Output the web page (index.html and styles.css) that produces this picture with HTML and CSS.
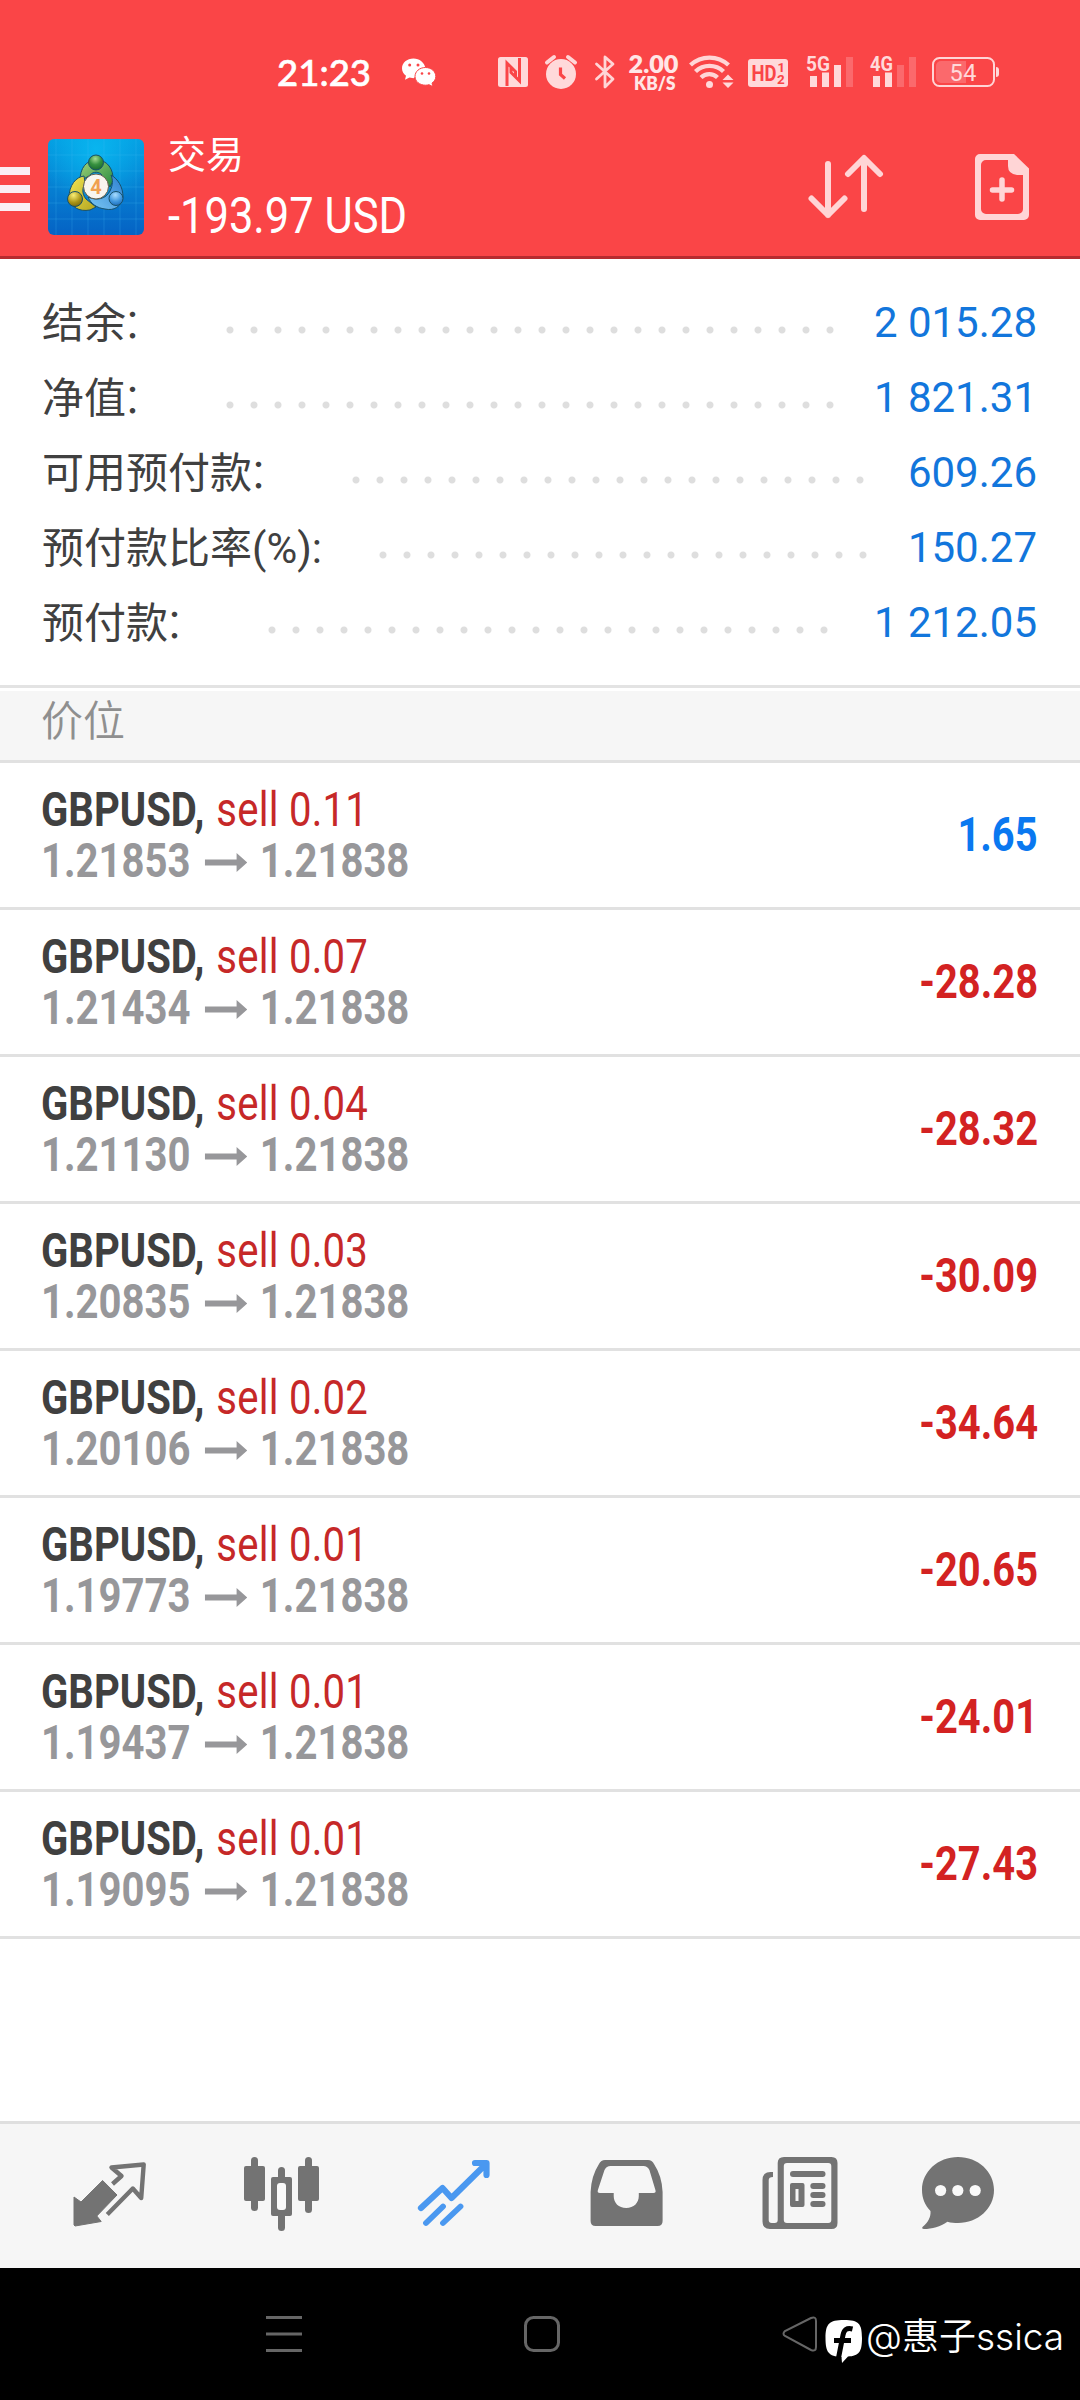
FILE: index.html
```html
<!DOCTYPE html>
<html lang="zh-CN">
<head>
<meta charset="utf-8">
<title>交易</title>
<link rel="stylesheet" href="styles.css">
</head>
<body>
<header class="header">
  <div class="status">
    <svg class="clock" width="96" height="50" viewBox="276 45 96 50"><text class="lato" x="277" y="85.5" font-size="36.5" textLength="94">21:23</text></svg>
    <svg class="wechat" width="36" height="50" viewBox="401 45 36 50">
      <path d="M413.500 58.500c-6.500 0-11.500 4.300-11.500 9.700 0 3 1.500 5.600 4 7.500l-1 4 4.500-2.200 4 .7 12-10c-1-5.500-6-9.700-12-9.700z"/>
      <path class="bite" d="M425.500 67.500c-6 0-10.500 4-10.500 8.900s4.500 8.800 10.500 8.800c1.200 0 2.400-.2 3.500-.5l4 2-1-3.600c2.400-1.700 3.800-4 3.800-6.700 0-4.900-4.500-8.900-10.300-8.900z"/>
      <g class="hole"><circle cx="409.700" cy="65" r="1.500"/><circle cx="418" cy="65" r="1.500"/><circle cx="422" cy="73.500" r="1.300"/><circle cx="429" cy="73.500" r="1.300"/></g>
    </svg>
    <svg class="nfc" width="32" height="50" viewBox="497 45 32 50">
      <rect x="498" y="57" width="30" height="30" rx="2.500"/>
      <path class="cut" d="M507 86V63l8.500 8.500v5M519.500 58v23l-8.500-8.500v-5" stroke-width="3"/>
    </svg>
    <svg class="alarm" width="34" height="50" viewBox="544 45 34 50">
      <circle cx="561" cy="74" r="15"/>
      <path class="line" d="M547 62.500l7-5.500M575 62.500l-7-5.500" stroke-width="4"/>
      <path class="cut" d="M560.500 67.500v7l4.500 4" stroke-width="3.200"/>
    </svg>
    <svg class="bt" width="24" height="50" viewBox="594 45 24 50"><path class="line" d="M596.500 64L613 79l-8 8V57l8 7-16.500 15" stroke-width="2.800"/></svg>
    <svg class="speed" width="54" height="50" viewBox="627 45 54 50">
      <text class="lato black" x="628.500" y="73" font-size="25" textLength="50" lengthAdjust="spacingAndGlyphs">2.00</text>
      <text class="lato black" x="634" y="90" font-size="19.500" textLength="41.500" lengthAdjust="spacingAndGlyphs">KB/S</text>
    </svg>
    <svg class="wifi" width="46" height="50" viewBox="688 45 46 50">
      <path class="line butt" d="M690.500 65a28 28 0 0 1 38 0M695.500 71.500a20 20 0 0 1 28 0M701 77.500a12 12 0 0 1 16.500 0" stroke-width="4.300"/>
      <circle cx="709.500" cy="84.500" r="3.500"/>
      <path d="M722.500 80l5.500-5.500 5.500 5.500zM722.500 82.500h11L728 88z"/>
    </svg>
    <svg class="hd" width="42" height="50" viewBox="747 45 42 50">
      <rect x="748" y="59" width="40" height="28" rx="3"/>
      <g class="hole"><text class="robo heavy" x="751.500" y="81" font-size="22" textLength="25" lengthAdjust="spacingAndGlyphs">HD</text><text class="robo heavy" x="777.500" y="72" font-size="13">1</text><text class="robo heavy" x="777" y="83.500" font-size="13.500">2</text></g>
    </svg>
    <svg class="sig" width="50" height="50" viewBox="805 45 50 50">
      <text class="robo heavy" x="806" y="70.500" font-size="21" textLength="24" lengthAdjust="spacingAndGlyphs">5G</text>
      <path d="M810 76h7v11h-7zM822 72.500h7V87h-7zM834 65h7v22h-7z"/><path class="faint" d="M846 57h7v30h-7z"/>
    </svg>
    <svg class="sig2" width="50" height="50" viewBox="868 45 50 50">
      <text class="robo heavy" x="870" y="70.500" font-size="21" textLength="23" lengthAdjust="spacingAndGlyphs">4G</text>
      <path d="M873 76h7v11h-7zM885 72.500h7V87h-7z"/><path class="faint" d="M897 65h7v22h-7zM909 57h7v30h-7z"/>
    </svg>
    <svg class="battery" width="70" height="50" viewBox="931 45 70 50">
      <rect class="line" x="933" y="58" width="61" height="28" rx="6.500" stroke-width="2"/>
      <path class="faint" d="M941 61h25v22h-25a5 5 0 0 1-5-5V66a5 5 0 0 1 5-5z"/>
      <path d="M996 67q3 0 3 3v4q0 3-3 3z"/>
      <text class="robo" x="949.500" y="81" font-size="23.500" textLength="27">54</text>
    </svg>
  </div>
  <div class="titlebar">
    <div class="menu"><i></i><i></i><i></i></div>
    <svg class="logo" width="96" height="96" viewBox="0 0 96 96">
      <defs>
        <linearGradient id="sky" x1="0" y1="0" x2="0" y2="1"><stop offset="0" stop-color="#039be0"/><stop offset=".5" stop-color="#0680d2"/><stop offset="1" stop-color="#0562c4"/></linearGradient>
        <radialGradient id="glow" cx=".5" cy=".1" r=".6"><stop offset="0" stop-color="#09b5ef"/><stop offset="1" stop-color="#09b5ef" stop-opacity="0"/></radialGradient>
        <linearGradient id="gr" x1="0" y1="0" x2="1" y2="1"><stop offset="0" stop-color="#a5d37a"/><stop offset="1" stop-color="#238a3e"/></linearGradient>
        <linearGradient id="ye" x1="0" y1="0" x2="1" y2="1"><stop offset="0" stop-color="#f2e554"/><stop offset="1" stop-color="#b3a51f"/></linearGradient>
        <linearGradient id="bl" x1="0" y1="1" x2="1" y2="0"><stop offset="0" stop-color="#7cc8f5"/><stop offset="1" stop-color="#2c7fd0"/></linearGradient>
        <radialGradient id="gb" cx=".45" cy=".25" r=".8"><stop offset="0" stop-color="#a4dc92"/><stop offset=".5" stop-color="#37913f"/><stop offset="1" stop-color="#17642c"/></radialGradient>
        <radialGradient id="yb" cx=".4" cy=".25" r=".8"><stop offset="0" stop-color="#f9ee77"/><stop offset=".6" stop-color="#ab9517"/><stop offset="1" stop-color="#77670d"/></radialGradient>
        <radialGradient id="bb" cx=".45" cy=".25" r=".8"><stop offset="0" stop-color="#a8dcff"/><stop offset=".6" stop-color="#3d95dd"/><stop offset="1" stop-color="#1d68b5"/></radialGradient>
      </defs>
      <rect width="96" height="96" rx="6" fill="url(#sky)"/><rect width="96" height="96" rx="6" fill="url(#glow)"/>
      <path class="grid" d="M8 0v96M24 0v96M40 0v96M56 0v96M72 0v96M88 0v96M0 16h96M0 32h96M0 48h96M0 64h96M0 80h96"/>
      <g stroke="#17506a" stroke-width="1">
        <path d="M32 42c0-13 6-21 17-21 10 0 17 9 16 21l-3 6-9-13c-4-3-9-2-12 2z" fill="url(#gr)"/>
        <path d="M36 37c-8 1-15 9-15 22 2 9 10 14 21 12l6-3-10-8c-5-6-3-12-1-17z" fill="url(#ye)"/>
        <path d="M63 36c7 4 12 12 12 22-2 10-9 14-18 12-8-1-14-5-17-12 9 4 18 2 22-6 3-6 3-11 1-16z" fill="url(#bl)"/>
        <circle cx="48" cy="23.500" r="7.500" fill="url(#gb)"/><circle cx="27" cy="60" r="7.500" fill="url(#yb)"/><circle cx="68" cy="59.500" r="7" fill="url(#bb)"/>
        <circle cx="48" cy="47.500" r="12.500" fill="#f8f5ef" stroke="#665d49"/>
      </g>
      <text class="robo heavy" x="48" y="54.500" text-anchor="middle" font-size="20" fill="#f0a050">4</text>
    </svg>
    <div class="heading"><div class="heading-name">交易</div><div class="heading-sum">-193.97 USD</div></div>
    <svg class="sort" width="76" height="68" viewBox="808 153 76 68"><path class="line" d="M828 164v51M811.500 198.500L828 215l16.500-16.500M864 209v-50M848 174l16-16 16 16" stroke-width="6"/></svg>
    <svg class="newdoc" width="56" height="68" viewBox="974 153 56 68">
      <path fill-rule="evenodd" d="M980 154h34l15 14.500V215a5 5 0 0 1-5 5h-44a5 5 0 0 1-5-5v-56a5 5 0 0 1 5-5zM986 160a5 5 0 0 0-5 5v44a5 5 0 0 0 5 5h32a5 5 0 0 0 5-5v-34h-6q-9-1-9-9v-6z"/>
      <path class="line" d="M1002 180v19M992.500 190h19" stroke-width="5.500"/>
    </svg>
  </div>
</header>

<section class="summary">
  <div class="sum-row"><span class="label">结余<span class="colon">：</span></span><i class="dots d1"></i><span class="value">2 015.28</span></div>
  <div class="sum-row"><span class="label">净值<span class="colon">：</span></span><i class="dots d1"></i><span class="value">1 821.31</span></div>
  <div class="sum-row"><span class="label">可用预付款<span class="colon">：</span></span><i class="dots d3"></i><span class="value">609.26</span></div>
  <div class="sum-row"><span class="label">预付款比率(%):</span><i class="dots d4"></i><span class="value">150.27</span></div>
  <div class="sum-row"><span class="label">预付款<span class="colon">：</span></span><i class="dots d5"></i><span class="value">1 212.05</span></div>
</section>

<h2 class="section-title">价位</h2>

<main class="positions">
  <article class="pos"><div class="deal"><div class="sym"><b>GBPUSD,</b><span>sell 0.11</span></div><div class="price"><span>1.21853</span><i class="arrow"></i><span>1.21838</span></div></div><div class="profit up">1.65</div></article>
  <article class="pos"><div class="deal"><div class="sym"><b>GBPUSD,</b><span>sell 0.07</span></div><div class="price"><span>1.21434</span><i class="arrow"></i><span>1.21838</span></div></div><div class="profit">-28.28</div></article>
  <article class="pos"><div class="deal"><div class="sym"><b>GBPUSD,</b><span>sell 0.04</span></div><div class="price"><span>1.21130</span><i class="arrow"></i><span>1.21838</span></div></div><div class="profit">-28.32</div></article>
  <article class="pos"><div class="deal"><div class="sym"><b>GBPUSD,</b><span>sell 0.03</span></div><div class="price"><span>1.20835</span><i class="arrow"></i><span>1.21838</span></div></div><div class="profit">-30.09</div></article>
  <article class="pos"><div class="deal"><div class="sym"><b>GBPUSD,</b><span>sell 0.02</span></div><div class="price"><span>1.20106</span><i class="arrow"></i><span>1.21838</span></div></div><div class="profit">-34.64</div></article>
  <article class="pos"><div class="deal"><div class="sym"><b>GBPUSD,</b><span>sell 0.01</span></div><div class="price"><span>1.19773</span><i class="arrow"></i><span>1.21838</span></div></div><div class="profit">-20.65</div></article>
  <article class="pos"><div class="deal"><div class="sym"><b>GBPUSD,</b><span>sell 0.01</span></div><div class="price"><span>1.19437</span><i class="arrow"></i><span>1.21838</span></div></div><div class="profit">-24.01</div></article>
  <article class="pos"><div class="deal"><div class="sym"><b>GBPUSD,</b><span>sell 0.01</span></div><div class="price"><span>1.19095</span><i class="arrow"></i><span>1.21838</span></div></div><div class="profit">-27.43</div></article>
</main>

<nav class="tabs">
  <svg viewBox="24 2124 171 144">
    <path d="M74 2197l7 5 21.600-21.500 14.400 14.500-20.200 21 4.400 5.500-26.200 4.500-1-1z" stroke="#737373" stroke-width="1" stroke-linejoin="round"/>
    <path class="tab-line" d="M112.500 2184l9-8-10-8.500 32.200-3-2.500 33.500-8.400-9.500-25.500 26" stroke-width="4.400"/>
  </svg>
  <svg viewBox="195 2124 171 144">
    <rect x="244" y="2166" width="21" height="35" rx="2"/><rect x="251" y="2157" width="7" height="54" rx="3.500"/>
    <rect x="298" y="2166" width="21" height="35" rx="2"/><rect x="305" y="2157" width="7" height="56" rx="3.500"/>
    <rect x="278" y="2167" width="7" height="64" rx="3.500"/><rect x="271" y="2177" width="21" height="39" rx="2"/>
    <rect class="paper" x="277" y="2183" width="9" height="27" rx="3"/>
  </svg>
  <svg class="active" viewBox="366 2124 171 144"><path class="tab-line round" d="M421 2208l21.500-20 9 10 34.500-34M475 2163h11.500v12" stroke-width="6.200"/><path class="tab-line round" d="M426 2223l17-16.500M443 2223l17.500-16.500" stroke-width="5.800"/></svg>
  <svg viewBox="537 2124 171 144"><path fill-rule="evenodd" d="M605 2160h43q4 0 6 4 8 12 8.600 28v29q0 5-5 5h-62q-5 0-5-5v-29q.600-16 8.400-28 2-4 6-4zM610.500 2166q-4 0-6 4l-6.600 20q-1 3 2 3h13.800v3c0 7 5 12 12.500 12s12.600-5 12.600-12v-3h14.600q3 0 2-3l-6-20q-2-4-6-4z"/></svg>
  <svg viewBox="708 2124 171 144">
    <path fill-rule="evenodd" d="M784 2157h47.500q6 0 6 6v60q0 6-6 6H770q-7.500 0-7.500-7.500V2180q0-8 8-8h2.500v5q-4.300 0-4.300 3v40q0 3 3 3h3q3 0 3-3v-57q0-6 6.300-6zM787 2163q-3.200 0-3.200 3v54q0 3 3.200 3h41.300q3 0 3-3v-54q0-3-3-3z"/>
    <rect x="790" y="2171" width="35.500" height="6" rx="3"/><path fill-rule="evenodd" d="M792 2183h10.500q2 0 2 2v20q0 2-2 2H792q-2 0-2-2v-20q0-2 2-2zM795.500 2189v12h3v-12z"/>
    <rect x="810.300" y="2183" width="15.200" height="6" rx="3"/><rect x="810.300" y="2192" width="15.200" height="6" rx="3"/><rect x="810.300" y="2201" width="15.200" height="6" rx="3"/>
  </svg>
  <svg viewBox="879 2124 171 144">
    <path d="M958 2157c20 0 36 14.500 36 33s-16 33-36 33c-3.500 0-7-.3-10.600-1.300-7 4.800-15.400 7.300-23.400 7.300-2 0-2.300-1.500-1-2.500 5-4 8-9.500 7.500-15.500-5.500-6-8.500-12.500-8.500-21 0-18.500 16-33 36-33z"/>
    <g class="paper"><circle cx="940.600" cy="2190.500" r="5.600"/><circle cx="957.800" cy="2190.500" r="5.600"/><circle cx="975.200" cy="2190.500" r="5.600"/></g>
  </svg>
</nav>

<footer class="sysnav">
  <svg class="recents" width="38" height="40" viewBox="264 2314 38 40"><path d="M266 2317.500h36M266 2334h36M266 2350.500h36"/></svg>
  <svg class="home" width="38" height="40" viewBox="523 2314 38 40"><rect x="525.500" y="2317.500" width="33" height="33" rx="8"/></svg>
  <svg class="back" width="38" height="40" viewBox="781 2314 38 40"><path d="M785 2331q-3 3 0 5l26 14q5 2 5-3v-26q0-5-5-3z"/></svg>
  <svg class="badge" width="38" height="46" viewBox="825 2319 38 46">
    <path d="M844 2320c15 0 18 4 18 18s-3 18-14 18.500l-6 6.500-.500-6c-13-.5-16-5-16-19s3.500-18 18.500-18z"/>
    <path class="f" d="M852.500 2329c-6-1.500-8.500 1-9.500 6l-4.500 23M834 2340.500h17"/>
  </svg>
  <span class="author">@惠子ssica</span>
</footer>
</body>
</html>
```
FILE: styles.css
```css
* { box-sizing: border-box; }
body {
  margin: 0;
  width: 1080px;
  height: 2400px;
  display: flex;
  flex-direction: column;
  background: #fff;
  font-family: Roboto, "Noto Sans CJK SC", sans-serif;
  overflow: hidden;
}
svg { display: block; flex: none; }

/* Header */
.header {
  height: 259px;
  background: #fa4547;
  border-bottom: 3px solid #b72b2f;
}
.status { display: flex; padding: 45px 0 0 276px; height: 120px; }
.status svg { fill: #ffd9da; }
.status .clock, .status .wechat { fill: #fff; }
.status .speed { fill: #ffe6e6; }
.lato { font-family: Lato, sans-serif; font-weight: 500; }
.robo { font-family: Roboto, sans-serif; }
.heavy { font-weight: 700; }
.black { font-weight: 800; }
.clock .lato { stroke: #fff; stroke-width: .6; }
.line { fill: none; stroke: #ffd5d6; stroke-linecap: round; stroke-linejoin: round; }
.butt { stroke-linecap: butt; }
.cut { fill: none; stroke: #fa4547; }
.hole { fill: #fa4547; }
.bite { stroke: #fa4547; stroke-width: 1; }
.faint { opacity: .25; }
.wechat { margin-left: 29px; }
.nfc { margin-left: 60px; }
.alarm { margin-left: 15px; }
.bt { margin-left: 16px; }
.speed { margin-left: 9px; }
.wifi { margin-left: 7px; }
.hd { margin-left: 13px; }
.sig { margin-left: 16px; }
.sig2 { margin-left: 13px; }
.battery { margin-left: 13px; }

.titlebar { display: flex; height: 136px; padding-top: 10px; }
.menu { display: flex; flex-direction: column; gap: 10px; width: 30px; margin: 37px 18px 0 0; }
.menu i { height: 8px; background: #fbeef4; }
.logo { margin-top: 9px; }
.grid { fill: none; stroke: #4cc1f5; stroke-opacity: .22; stroke-width: 1; }
.heading { width: 664px; padding: 1px 0 0 24px; color: #fff; white-space: nowrap; }
.heading-name { font-size: 38px; line-height: 48px; }
.heading-sum { font-size: 50px; line-height: 58px; margin-top: 8px; transform: scaleX(.87); transform-origin: 0 0; }
.sort, .newdoc { margin-top: 23px; fill: #ffd5d6; }
.newdoc { margin-left: 90px; }

/* Account summary */
.summary { height: 426px; padding: 26px 43px 0 42px; }
.sum-row { display: flex; align-items: center; height: 75px; font-size: 42px; line-height: 75px; color: #404040; white-space: nowrap; }
.label { padding-top: 1px; }
.colon { margin-left: -4px; font-weight: 300; }
.dots {
  height: 8px;
  margin: 14px 0 0 auto;
  background: radial-gradient(circle at 12px 4px, #dedede 3px, transparent 4px) 0 0 / 24px 8px;
}
.d1 { width: 624px; }
.d3 { width: 528px; }
.d4 { width: 504px; }
.d5 { width: 576px; }
.value { width: 195px; color: #1276dc; text-align: right; }
.d3 + .value { width: 165px; }
.d4 + .value { width: 162px; }
.d5 + .value { width: 201px; }

.section-title {
  height: 78px;
  margin: 0;
  padding: 1px 0 0 41px;
  border-top: 3px solid #e3e3e3;
  border-bottom: 3px solid #e1e1e1;
  background: linear-gradient(#fff 3px, #f6f6f6 3px);
  color: #8f8f8f;
  font-size: 42px;
  font-weight: 350;
  line-height: 66px;
}

/* Open positions */
.positions { height: 1358px; }
.pos { display: flex; justify-content: space-between; height: 147px; padding: 21px 42px 0 41px; border-bottom: 3px solid #e1e1e1; white-space: nowrap; }
.sym, .price { display: flex; align-items: center; height: 51px; font-size: 48px; transform: scaleX(.835); transform-origin: 0 0; }
.sym b { width: 210px; color: #404040; }
.sym span { color: #c62828; letter-spacing: .3px; }
.price { color: #97979a; font-weight: 700; }
.price span { width: 182px; }
.arrow { width: 51px; height: 19px; margin: 4px 15px 0 14px; background: #97979a; clip-path: polygon(0 34%, 75% 34%, 75% 0, 100% 50%, 75% 100%, 75% 66%, 0 66%); }
.profit { height: 102px; line-height: 102px; font-size: 48px; font-weight: 700; color: #d32222; transform: scaleX(.83); transform-origin: 100% 0; }
.up { color: #0a78f0; }

/* Tab bar */
.tabs { display: flex; height: 147px; padding: 0 30px 0 24px; border-top: 3px solid #dfdfdf; background: #f6f6f6; }
.tabs svg { width: 171px; height: 144px; fill: #737373; }
.tab-line { fill: none; stroke: #737373; stroke-linejoin: round; }
.round { stroke-linecap: round; }
.active .tab-line { stroke: #4a98f0; }
.tabs .paper { fill: #f9f9f9; }

/* System navigation */
.sysnav { display: flex; height: 132px; padding: 46px 0 0 264px; background: #000; }
.sysnav svg { fill: none; stroke: #666; stroke-width: 3; }
.home { margin-left: 221px; }
.back { margin-left: 220px; }
.sysnav .back { stroke-width: 2; }
.sysnav .badge { margin: 5px 0 0 6px; fill: #fff; stroke: none; }
.badge .f { fill: none; stroke: #000; stroke-width: 5; }
.author { margin-left: 3px; color: #fff; font: 350 37px/46px Inter, "Noto Sans CJK SC", sans-serif; white-space: nowrap; }
```
